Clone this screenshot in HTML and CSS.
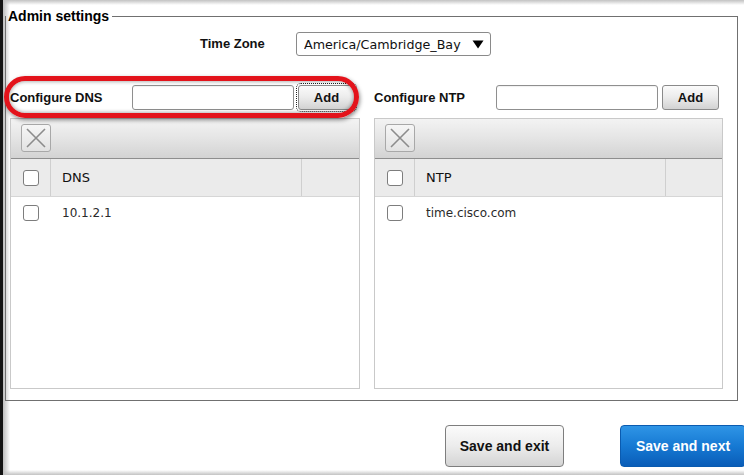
FILE: index.html
```html
<!DOCTYPE html>
<html>
<head>
<meta charset="utf-8">
<link rel="stylesheet" href="styles.css">
</head>
<body>
<div class="screen">
  <fieldset class="admin">
    <legend class="admin-legend">Admin settings</legend>
    <div class="content">
      <div class="tz-row">
        <span class="lbl tz-label">Time Zone</span>
        <div class="select">
          <span class="select-text">America/Cambridge_Bay</span>
          <svg class="caret" width="12" height="9" viewBox="0 0 12 9"><polygon points="0.5,0.5 11.5,0.5 6,8.5" fill="#000"/></svg>
        </div>
      </div>
      <div class="columns">
        <div class="col">
          <div class="config-row">
            <span class="lbl">Configure DNS</span>
            <span class="text-input"></span>
            <button class="btn-add is-focused">Add</button>
            <div class="highlight"></div>
          </div>
          <div class="panel">
            <div class="toolbar">
              <span class="del-btn"><svg width="20" height="20" viewBox="0 0 20 20"><path d="M1 1 L19 19 M19 1 L1 19" stroke="#8c8c8c" stroke-width="1.6" fill="none"/></svg></span>
            </div>
            <div class="grid-head">
              <span class="cell cell-check"><span class="chk"></span></span>
              <span class="cell cell-name">DNS</span>
              <span class="cell cell-rest"></span>
            </div>
            <div class="grid-row">
              <span class="cell cell-check"><span class="chk"></span></span>
              <span class="cell cell-name">10.1.2.1</span>
            </div>
          </div>
        </div>
        <div class="col">
          <div class="config-row">
            <span class="lbl">Configure NTP</span>
            <span class="text-input"></span>
            <button class="btn-add">Add</button>
          </div>
          <div class="panel">
            <div class="toolbar">
              <span class="del-btn"><svg width="20" height="20" viewBox="0 0 20 20"><path d="M1 1 L19 19 M19 1 L1 19" stroke="#8c8c8c" stroke-width="1.6" fill="none"/></svg></span>
            </div>
            <div class="grid-head">
              <span class="cell cell-check"><span class="chk"></span></span>
              <span class="cell cell-name">NTP</span>
              <span class="cell cell-rest"></span>
            </div>
            <div class="grid-row">
              <span class="cell cell-check"><span class="chk"></span></span>
              <span class="cell cell-name">time.cisco.com</span>
            </div>
          </div>
        </div>
      </div>
    </div>
  </fieldset>
  <div class="footer">
    <button class="btn btn-grey">Save and exit</button>
    <button class="btn btn-blue">Save and next</button>
  </div>
</div>
</body>
</html>
```
FILE: styles.css
```css
html, body {
  margin: 0;
  padding: 0;
  overflow: hidden;
  background: #fff;
}
body {
  font-family: "DejaVu Sans", sans-serif;
}
.screen {
  width: 744px;
  height: 475px;
  box-sizing: border-box;
  overflow: hidden;
  border-left: 3px solid #141414;
  background:
    linear-gradient(to bottom, #c2c2c2 0, rgba(255,255,255,0) 5px),
    linear-gradient(to top, #c2c2c2 0, rgba(255,255,255,0) 5px),
    linear-gradient(to right, #bdbdbd 0, rgba(255,255,255,0) 7px),
    #fff;
  padding-top: 8px;
}
.admin {
  margin: 0 0 0 2px;
  padding: 0;
  width: 733px;
  box-sizing: border-box;
  min-width: 0;
  border: 1px solid #707070;
  position: relative;
}
.admin-legend {
  padding: 0 3px 0 2px;
  font: bold 14px/16px "Liberation Sans", Arial, sans-serif;
  color: #000;
}
.content {
  padding: 0 14px 11px 4px;
}
.lbl {
  font: bold 13px/16px "Liberation Sans", Arial, sans-serif;
  color: #111;
}
.tz-row {
  display: flex;
  align-items: center;
  margin-top: 8px;
  height: 24px;
  padding-left: 190px;
}
.tz-label {
  width: 96px;
}
.select {
  width: 195px;
  height: 24px;
  box-sizing: border-box;
  border: 1px solid #8a8a8a;
  border-radius: 3px;
  display: flex;
  align-items: center;
  padding-left: 7px;
  background: #fff;
}
.select-text {
  width: 163px;
  overflow: hidden;
  white-space: nowrap;
  font-size: 12.7px;
  color: #111;
}
.caret {
  margin-left: 5px;
}
.columns {
  display: grid;
  grid-template-columns: 350px 349px;
  column-gap: 14px;
  margin-top: 29px;
}
.config-row {
  display: grid;
  grid-template-columns: 118px 162px 57px;
  column-gap: 4px;
  align-items: center;
  height: 25px;
  position: relative;
}
.text-input {
  height: 25px;
  box-sizing: border-box;
  border: 1px solid #8f8f8f;
  border-radius: 3px;
  background: #fff;
  box-shadow: inset 0 1px 1px rgba(0,0,0,0.06);
}
.btn-add {
  height: 25px;
  box-sizing: border-box;
  border: 1px solid #8a8a8a;
  border-radius: 3px;
  background: linear-gradient(to bottom, #fbfbfb 0, #ebebeb 50%, #d2d2d2 100%);
  font: bold 13px/16px "Liberation Sans", Arial, sans-serif;
  color: #111;
  padding: 0;
}
.is-focused {
  outline: 1px dotted #222;
  outline-offset: 1px;
}
.highlight {
  position: absolute;
  left: -6px;
  top: -9px;
  width: 355px;
  height: 42px;
  box-sizing: border-box;
  border: 5px solid #e3131b;
  border-radius: 21px;
  box-shadow: 1px 2px 4px rgba(0,0,0,0.45), inset 0 0 4px rgba(0,0,0,0.45);
  pointer-events: none;
}
.panel {
  margin-top: 8px;
  height: 271px;
  box-sizing: border-box;
  border: 1px solid #c9c9c9;
  background: #fff;
}
.toolbar {
  border-bottom: 1px solid #8e8e8e;
  background: linear-gradient(to bottom, #f3f3f3 0, #e6e6e6 45%, #d3d3d3 100%);
  padding: 5px 0 0 10px;
  box-sizing: border-box;
  height: 40px;
}
.del-btn {
  display: flex;
  align-items: center;
  justify-content: center;
  width: 30px;
  height: 28px;
  box-sizing: border-box;
  border: 1px solid #a8a8a8;
  border-radius: 3px;
  background: linear-gradient(to bottom, #f6f6f6, #e2e2e2);
}
.grid-head, .grid-row {
  display: grid;
  grid-template-columns: 40px 251px 1fr;
}
.grid-head {
  height: 38px;
  box-sizing: border-box;
  background: #ebebeb;
  border-bottom: 1px solid #d6d6d6;
}
.grid-row {
  height: 32px;
}
.cell {
  display: flex;
  align-items: center;
}
.cell-check {
  padding-left: 12px;
}
.grid-head .cell-check, .grid-head .cell-name {
  border-right: 1px solid #cfcfcf;
}
.cell-name {
  padding-left: 11px;
  font-size: 12px;
  color: #2a2a2a;
}
.grid-head .cell-name {
  font-size: 13px;
  color: #111;
}
.chk {
  width: 16px;
  height: 16px;
  box-sizing: border-box;
  border: 1px solid #7d7d7d;
  border-radius: 3px;
  background: #fff;
}
.footer {
  display: flex;
  margin-top: 24px;
  padding-left: 442px;
  column-gap: 56px;
}
.btn {
  height: 42px;
  box-sizing: border-box;
  border-radius: 4px;
  font: bold 14px/16px "Liberation Sans", Arial, sans-serif;
  padding: 0;
  flex-shrink: 0;
}
.btn-grey {
  width: 119px;
  border: 1px solid #7e7e7e;
  background: linear-gradient(to bottom, #fbfbfb 0, #ececec 50%, #d4d4d4 100%);
  color: #111;
}
.btn-blue {
  width: 126px;
  border: 1px solid #0a5bb0;
  background: linear-gradient(to bottom, #2f95e6 0, #1679d3 50%, #0a5db8 100%);
  color: #fff;
}
```
